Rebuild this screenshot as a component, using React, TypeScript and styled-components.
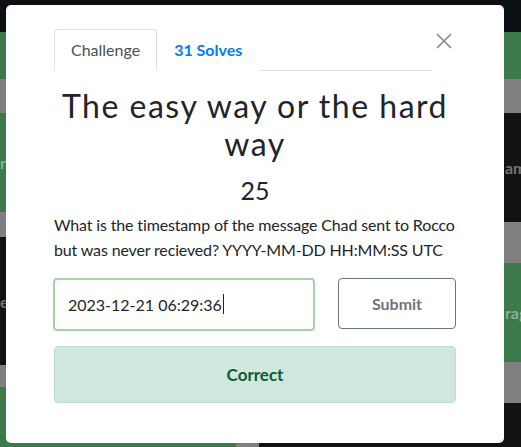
import React from "react";
import styled, { createGlobalStyle } from "styled-components";

const Global = createGlobalStyle`
  html, body { margin: 0; padding: 0; }
  body {
    font-family: "Lato", sans-serif;
    width: 521px;
    height: 447px;
    overflow: hidden;
    background: #7f7f7f;
  }
`;

type Tone = "green" | "dark" | "gap";
const toneColor: Record<Tone, string> = {
  green: "#3c7a4c",
  dark: "#111214",
  gap: "#7f7f7f",
};

const Page = styled.div`
  position: relative;
  width: 521px;
  height: 447px;
  overflow: hidden;
  background: #7f7f7f;
  font-family: "Lato", sans-serif;
`;

const NavBar = styled.div`
  height: 32px;
  background: #0c0f13;
`;

const Board = styled.div`
  display: grid;
  grid-template-columns: 259px 1fr;
`;

const Column = styled.div`
  display: flex;
  flex-direction: column;
`;

const Tile = styled.div<{ $h: number; $tone: Tone; $w?: number }>`
  height: ${(p) => p.$h}px;
  width: ${(p) => (p.$w ? `${p.$w}px` : "100%")};
  background: ${(p) => toneColor[p.$tone]};
  display: flex;
  align-items: center;
  overflow: hidden;
  white-space: nowrap;
`;

const TileLabel = styled.span<{ $indent: number }>`
  padding-left: ${(p) => p.$indent}px;
  font-size: 16px;
  font-weight: 700;
  color: rgba(255, 255, 255, 0.42);
`;

const Modal = styled.div`
  position: absolute;
  top: 5px;
  left: 6px;
  width: 498px;
  box-sizing: border-box;
  background: #fff;
  border-radius: 5px;
  padding: 24px 48px 40px;
`;

const Header = styled.div`
  display: flex;
  align-items: flex-start;
`;

const Tabs = styled.div`
  flex: 1;
  display: flex;
  border-bottom: 1px solid #dee2e6;
`;

const Tab = styled.div<{ $active?: boolean }>`
  padding: 8px 16px;
  margin-bottom: -1px;
  font-size: 16px;
  line-height: 24px;
  border: 1px solid ${(p) => (p.$active ? "#dee2e6" : "transparent")};
  border-bottom-color: ${(p) => (p.$active ? "#fff" : "transparent")};
  border-radius: 4px 4px 0 0;
  background: #fff;
  color: ${(p) => (p.$active ? "#495057" : "#007bff")};
  font-weight: ${(p) => (p.$active ? 400 : 700)};
`;

const CloseButton = styled.button`
  width: 24px;
  height: 24px;
  margin-top: 4px;
  padding: 0;
  border: none;
  background: none;
  display: flex;
  justify-content: center;
`;

const Title = styled.h2`
  margin: 0;
  padding-top: 16px;
  font-size: 32px;
  line-height: 1.2;
  font-weight: 400;
  letter-spacing: 1.5px;
  text-align: center;
  color: #212529;
`;

const Value = styled.h3`
  margin: 11px 0 7px;
  font-size: 25px;
  line-height: 1.2;
  font-weight: 400;
  text-align: center;
  color: #212529;
`;

const Description = styled.p`
  margin: 0 0 16px;
  font-size: 16px;
  line-height: 25px;
  letter-spacing: -0.15px;
  color: #212529;
  white-space: nowrap;
`;

const FormRow = styled.div`
  display: grid;
  grid-template-columns: 262px 1fr;
  gap: 23px;
  align-items: start;
  margin-left: -1px;
`;

const InputBox = styled.div`
  height: 53px;
  box-sizing: border-box;
  border: 2px solid #a3d4a6;
  border-radius: 4px;
  padding: 0 13px;
  display: flex;
  align-items: center;
  font-size: 16px;
  color: #212529;
  background: #fff;
`;

const Caret = styled.span`
  display: inline-block;
  width: 1px;
  height: 20px;
  background: #212529;
  margin-left: 1px;
`;

const SubmitButton = styled.button`
  height: 51px;
  border: 1px solid #6c757d;
  border-radius: 4px;
  background: #fff;
  color: #6c757d;
  font-family: "Lato", sans-serif;
  font-size: 16px;
  font-weight: 700;
`;

const Alert = styled.div`
  margin-top: 15px;
  height: 57px;
  box-sizing: border-box;
  border: 1px solid #bbdecd;
  border-radius: 4px;
  background: #cfe7dc;
  color: #0f5a36;
  font-size: 17px;
  font-weight: 700;
  display: flex;
  align-items: center;
  justify-content: center;
`;

export default function App() {
  return (
    <>
      <Global />
      <Page>
        <NavBar />
        <Board>
          <Column>
            <Tile $h={47} $tone="green" $w={236} />
            <Tile $h={34} $tone="gap" />
            <Tile $h={99} $tone="green" $w={236}>
              <TileLabel $indent={0}>n</TileLabel>
            </Tile>
            <Tile $h={25} $tone="gap" />
            <Tile $h={128} $tone="dark" $w={236}>
              <TileLabel $indent={0}>e</TileLabel>
            </Tile>
            <Tile $h={22} $tone="gap" />
            <Tile $h={80} $tone="green" $w={236} />
          </Column>
          <Column>
            <Tile $h={47} $tone="green" />
            <Tile $h={34} $tone="gap" />
            <Tile $h={109} $tone="dark">
              <TileLabel $indent={246}>ame</TileLabel>
            </Tile>
            <Tile $h={41} $tone="gap" />
            <Tile $h={99} $tone="green">
              <TileLabel $indent={246}>rag</TileLabel>
            </Tile>
            <Tile $h={41} $tone="gap" />
            <Tile $h={60} $tone="dark" />
          </Column>
        </Board>

        <Modal>
          <Header>
            <Tabs>
              <Tab $active>Challenge</Tab>
              <Tab>31 Solves</Tab>
            </Tabs>
            <CloseButton aria-label="Close">
              <svg width="16" height="16" viewBox="0 0 16 16">
                <path d="M1 1 L15 15 M15 1 L1 15" stroke="#8a8a8a" strokeWidth="1.7" fill="none" />
              </svg>
            </CloseButton>
          </Header>
          <Title>The easy way or the hard way</Title>
          <Value>25</Value>
          <Description>
            What is the timestamp of the message Chad sent to Rocco
            <br />
            but was never recieved? YYYY-MM-DD HH:MM:SS UTC
          </Description>
          <FormRow>
            <InputBox>
              2023-12-21 06:29:36
              <Caret />
            </InputBox>
            <SubmitButton>Submit</SubmitButton>
          </FormRow>
          <Alert>Correct</Alert>
        </Modal>
      </Page>
    </>
  );
}
